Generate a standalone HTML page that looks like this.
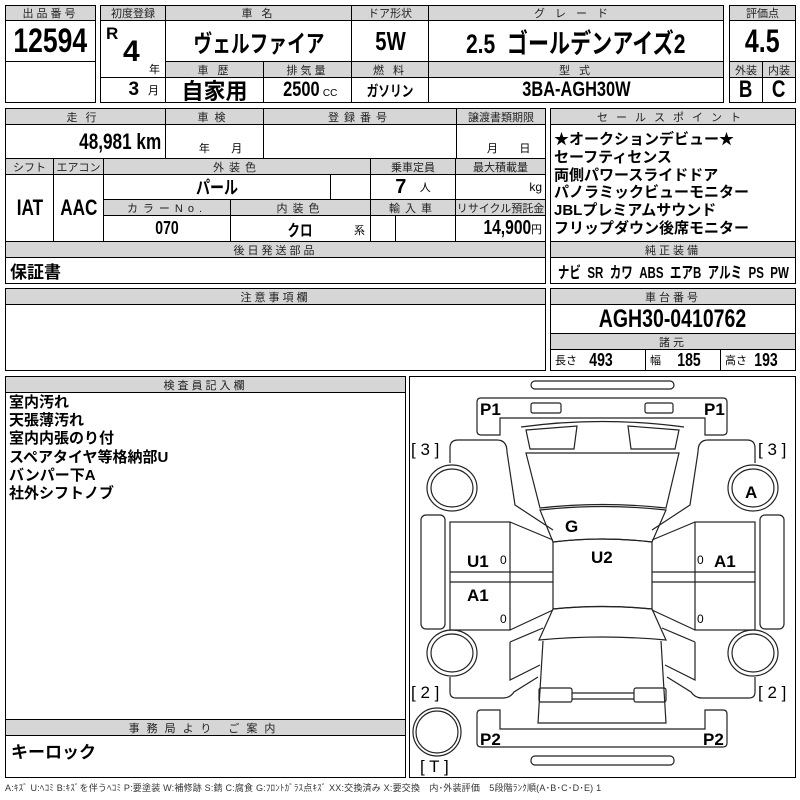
<!DOCTYPE html>
<html><head><meta charset="utf-8"><style>
body{margin:0;width:800px;height:800px;background:#fff;position:relative;overflow:hidden;font-family:"Liberation Sans","Noto Sans CJK JP",sans-serif;color:#000}
.c{position:absolute;border:1px solid #000;box-sizing:border-box;display:flex;align-items:center;justify-content:center;background:#fff;white-space:nowrap}
.h{background:#d6d6d6;font-size:11px;letter-spacing:3px;color:#222}
.b{font-weight:bold}
.n{display:inline-block;transform:scaleX(.78)}
.nr{display:inline-block;transform:scaleX(.78);transform-origin:right center}
svg{position:absolute;left:0;top:0}
</style></head><body>
<div class="c h" style="left:5px;top:5px;width:91px;height:16px">出品番号</div>
<div class="c b" style="left:5px;top:20px;width:91px;height:42px;font-size:34px"><span class="n">12594</span></div>
<div class="c" style="left:5px;top:61px;width:91px;height:42px"></div>

<div class="c h" style="left:100px;top:5px;width:66px;height:16px;letter-spacing:0">初度登録</div>
<div class="c h" style="left:165px;top:5px;width:187px;height:16px">車 名</div>
<div class="c h" style="left:351px;top:5px;width:78px;height:16px;letter-spacing:0">ドア形状</div>
<div class="c h" style="left:428px;top:5px;width:296px;height:16px;letter-spacing:10px">グレード</div>
<div class="c" style="left:100px;top:20px;width:66px;height:58px"><span class="b" style="position:absolute;left:5px;top:3px;font-size:17px">R</span><span class="b" style="position:absolute;left:22px;top:14px;font-size:30px">4</span><span style="position:absolute;left:48px;top:40px;font-size:11px">年</span></div>
<div class="c" style="left:100px;top:77px;width:66px;height:26px;justify-content:flex-end;padding-right:6px"><span class="b" style="font-size:19px">3</span>&nbsp;&nbsp;<span style="font-size:11px">月</span></div>
<div class="c b" style="left:165px;top:20px;width:187px;height:42px;font-size:24px"><span class="n">ヴェルファイア</span></div>
<div class="c b" style="left:351px;top:20px;width:78px;height:42px;font-size:26px"><span class="n">5W</span></div>
<div class="c b" style="left:428px;top:20px;width:296px;height:42px;font-size:27px"><span class="n">2.5&nbsp;&nbsp;ゴールデンアイズ2</span></div>
<div class="c h" style="left:165px;top:61px;width:99px;height:17px">車 歴</div>
<div class="c h" style="left:263px;top:61px;width:89px;height:17px">排気量</div>
<div class="c h" style="left:351px;top:61px;width:78px;height:17px">燃 料</div>
<div class="c h" style="left:428px;top:61px;width:296px;height:17px">型 式</div>
<div class="c b" style="left:165px;top:77px;width:99px;height:26px;font-size:22px">自家用</div>
<div class="c" style="left:263px;top:77px;width:89px;height:26px"><span class="b n" style="font-size:21px;margin-right:-6px">2500</span>&nbsp;<span style="font-size:10px;margin-top:6px">CC</span></div>
<div class="c b" style="left:351px;top:77px;width:78px;height:26px;font-size:15px"><span class="n">ガソリン</span></div>
<div class="c b" style="left:428px;top:77px;width:296px;height:26px;font-size:21px"><span class="n">3BA-AGH30W</span></div>

<div class="c h" style="left:729px;top:5px;width:67px;height:16px;letter-spacing:0">評価点</div>
<div class="c b" style="left:729px;top:20px;width:67px;height:42px;font-size:32px"><span class="n">4.5</span></div>
<div class="c h" style="left:729px;top:61px;width:34px;height:17px;letter-spacing:0">外装</div>
<div class="c h" style="left:762px;top:61px;width:34px;height:17px;letter-spacing:0">内装</div>
<div class="c b" style="left:729px;top:77px;width:34px;height:26px;font-size:24px"><span class="n">B</span></div>
<div class="c b" style="left:762px;top:77px;width:34px;height:26px;font-size:24px"><span class="n">C</span></div>

<div class="c h" style="left:5px;top:108px;width:161px;height:17px;letter-spacing:8px">走行</div>
<div class="c h" style="left:165px;top:108px;width:99px;height:17px;letter-spacing:6px">車検</div>
<div class="c h" style="left:263px;top:108px;width:194px;height:17px;letter-spacing:5px">登録番号</div>
<div class="c h" style="left:456px;top:108px;width:90px;height:17px;letter-spacing:0">譲渡書類期限</div>
<div class="c b" style="left:5px;top:124px;width:161px;height:35px;font-size:22px;justify-content:flex-end;padding-right:4px"><span class="nr">48,981 km</span></div>
<div class="c" style="left:165px;top:124px;width:99px;height:35px;font-size:11px;align-items:flex-end;padding-bottom:2px">&nbsp;&nbsp;&nbsp;&nbsp;年&nbsp;&nbsp;&nbsp;&nbsp;&nbsp;&nbsp;&nbsp;月</div>
<div class="c" style="left:263px;top:124px;width:194px;height:35px"></div>
<div class="c" style="left:456px;top:124px;width:90px;height:35px;font-size:11px;align-items:flex-end;padding-bottom:2px">&nbsp;&nbsp;&nbsp;&nbsp;&nbsp;月&nbsp;&nbsp;&nbsp;&nbsp;&nbsp;&nbsp;&nbsp;日</div>
<div class="c h" style="left:5px;top:158px;width:49px;height:17px;letter-spacing:0">シフト</div>
<div class="c h" style="left:53px;top:158px;width:51px;height:17px;letter-spacing:0">エアコン</div>
<div class="c h" style="left:103px;top:158px;width:268px;height:17px;letter-spacing:5px">外装色</div>
<div class="c h" style="left:370px;top:158px;width:86px;height:17px;letter-spacing:0">乗車定員</div>
<div class="c h" style="left:455px;top:158px;width:91px;height:17px;letter-spacing:0">最大積載量</div>
<div class="c b" style="left:5px;top:174px;width:49px;height:68px;font-size:22px"><span class="n">IAT</span></div>
<div class="c b" style="left:53px;top:174px;width:51px;height:68px;font-size:22px"><span class="n">AAC</span></div>
<div class="c b" style="left:103px;top:174px;width:228px;height:26px;font-size:18px"><span class="n">パール</span></div>
<div class="c" style="left:330px;top:174px;width:41px;height:26px"></div>
<div class="c" style="left:370px;top:174px;width:86px;height:26px"><span class="b" style="font-size:20px">7</span>&nbsp;&nbsp;&nbsp;<span style="font-size:11px">人</span></div>
<div class="c" style="left:455px;top:174px;width:91px;height:26px;font-size:12px;justify-content:flex-end;padding-right:3px">kg</div>
<div class="c h" style="left:103px;top:199px;width:128px;height:17px;letter-spacing:5px">カラーNo.</div>
<div class="c h" style="left:230px;top:199px;width:141px;height:17px;letter-spacing:5px">内装色</div>
<div class="c h" style="left:370px;top:199px;width:86px;height:17px;letter-spacing:5px">輸入車</div>
<div class="c h" style="left:455px;top:199px;width:91px;height:17px;letter-spacing:0">リサイクル預託金</div>
<div class="c b" style="left:103px;top:215px;width:128px;height:27px;font-size:18px"><span class="n">070</span></div>
<div class="c" style="left:230px;top:215px;width:141px;height:27px"><span class="b n" style="font-size:16px">クロ</span><span style="position:absolute;right:5px;bottom:3px;font-size:11px">系</span></div>
<div class="c" style="left:370px;top:215px;width:26px;height:27px"></div>
<div class="c" style="left:395px;top:215px;width:61px;height:27px"></div>
<div class="c" style="left:455px;top:215px;width:91px;height:27px;justify-content:flex-end;padding-right:3px"><span class="b nr" style="font-size:20px">14,900</span><span style="font-size:11px">円</span></div>
<div class="c h" style="left:5px;top:241px;width:541px;height:17px">後日発送部品</div>
<div class="c b" style="left:5px;top:257px;width:541px;height:27px;font-size:17px;justify-content:flex-start;padding-left:4px">保証書</div>

<div class="c h" style="left:550px;top:108px;width:246px;height:17px;letter-spacing:8px">セールスポイント</div>
<div class="c b" style="left:550px;top:124px;width:246px;height:118px;font-size:15px;line-height:17.8px;display:block;padding:6px 0 0 3px">★オークションデビュー★<br>セーフティセンス<br>両側パワースライドドア<br>パノラミックビューモニター<br>JBLプレミアムサウンド<br>フリップダウン後席モニター</div>
<div class="c h" style="left:550px;top:241px;width:246px;height:17px">純正装備</div>
<div class="c b" style="left:550px;top:257px;width:246px;height:27px;font-size:16px"><span class="n" style="transform:scaleX(.72)">ナビ&nbsp;&nbsp;SR&nbsp;&nbsp;カワ&nbsp;&nbsp;ABS&nbsp;&nbsp;エアB&nbsp;&nbsp;アルミ&nbsp;&nbsp;PS&nbsp;&nbsp;PW</span></div>

<div class="c h" style="left:5px;top:288px;width:541px;height:17px">注意事項欄</div>
<div class="c" style="left:5px;top:304px;width:541px;height:67px"></div>
<div class="c h" style="left:550px;top:288px;width:246px;height:17px">車台番号</div>
<div class="c b" style="left:550px;top:304px;width:246px;height:30px;font-size:25px"><span class="n">AGH30-0410762</span></div>
<div class="c h" style="left:550px;top:333px;width:246px;height:17px">諸元</div>
<div class="c" style="left:550px;top:349px;width:96px;height:22px;justify-content:flex-start;padding-left:4px"><span style="font-size:11px">長さ</span>&nbsp;&nbsp;<span class="b n" style="font-size:18px">493</span></div>
<div class="c" style="left:645px;top:349px;width:76px;height:22px;justify-content:flex-start;padding-left:4px"><span style="font-size:11px">幅</span>&nbsp;&nbsp;&nbsp;<span class="b n" style="font-size:18px">185</span></div>
<div class="c" style="left:720px;top:349px;width:76px;height:22px;justify-content:flex-start;padding-left:4px"><span style="font-size:11px">高さ</span>&nbsp;<span class="b n" style="font-size:18px">193</span></div>

<div class="c h" style="left:5px;top:376px;width:401px;height:17px">検査員記入欄</div>
<div class="c b" style="left:5px;top:392px;width:401px;height:328px;font-size:15px;line-height:18.2px;display:block;padding:1px 0 0 3px">室内汚れ<br>天張薄汚れ<br>室内内張のり付<br>スペアタイヤ等格納部U<br>バンパー下A<br>社外シフトノブ</div>
<div class="c h" style="left:5px;top:719px;width:401px;height:17px;letter-spacing:7px">事務局より ご案内</div>
<div class="c b" style="left:5px;top:735px;width:401px;height:43px;font-size:17px;justify-content:flex-start;align-items:flex-start;padding:2px 0 0 5px">キーロック</div>
<div class="c" style="left:409px;top:376px;width:387px;height:402px"></div>
<div style="position:absolute;left:5px;top:781px;font-size:9px;color:#333;white-space:nowrap;letter-spacing:0.2px">A:ｷｽﾞ U:ﾍｺﾐ B:ｷｽﾞを伴うﾍｺﾐ P:要塗装 W:補修跡 S:錆 C:腐食 G:ﾌﾛﾝﾄｶﾞﾗｽ点ｷｽﾞ XX:交換済み X:要交換　内･外装評価　5段階ﾗﾝｸ順(A･B･C･D･E) 1</div>

<svg width="800" height="800" viewBox="0 0 800 800" fill="none" stroke="#222" stroke-width="1.2">
<rect x="531" y="381" width="143" height="8" rx="4"/>
<rect x="531" y="756" width="143" height="9" rx="4"/>
<path d="M481,398H723Q727,398 727,402V431Q727,435 723,435H705V418H500V435H481Q477,435 477,431V402Q477,398 481,398Z"/>
<path d="M481,747H723Q727,747 727,743V714Q727,710 723,710H705V729H500V710H481Q477,710 477,714V743Q477,747 481,747Z"/>
<rect x="531" y="403" width="30" height="10" rx="2"/><rect x="645" y="403" width="28" height="10" rx="2"/>
<path d="M521,427Q602,416 684,427"/>
<path d="M526,453H679L666,508Q602,501 540,508Z"/>
<path d="M540,510Q602,503 666,510L652,542Q602,536 553,542Z"/>
<path d="M553,542Q602,536 652,542V609Q602,604 553,609Z"/>
<path d="M553,609Q602,604 652,609L666,640Q602,634 539,640Z"/>
<path d="M543,641L538,723H666L661,641"/>
<rect x="539" y="688" width="33" height="14" rx="2"/><rect x="634" y="688" width="32" height="14" rx="2"/>
<path d="M572,693H634M572,699H634"/>
<g id="half">
<path d="M526,430L577,426L574,449L530,449Z"/>
<path d="M450,463V448Q450,440 458,440H497Q507,440 507,452L515,505L553,530"/>
<rect x="450" y="522" width="60" height="108"/>
<path d="M510,522L553,540M510,630L553,610M450,572H553M450,582H553"/>
<path d="M510,642L543,628M510,642V680L540,665"/>
<path d="M450,677V692Q450,698 456,698H503Q510,698 514,692L538,677"/>
<ellipse cx="452" cy="488" rx="25" ry="23"/><ellipse cx="452" cy="488" rx="21" ry="19"/>
<ellipse cx="452" cy="653" rx="25" ry="23"/><ellipse cx="452" cy="653" rx="21" ry="19"/>
<rect x="421" y="515" width="24" height="114" rx="5"/>
</g>
<use href="#half" transform="translate(1205,0) scale(-1,1)"/>
<circle cx="437" cy="732" r="24"/><circle cx="437" cy="732" r="21"/>
<g fill="#000" stroke="none" font-family="Liberation Sans,sans-serif" font-weight="bold" font-size="17">
<text x="480" y="415">P1</text><text x="704" y="415">P1</text>
<text x="745" y="498">A</text><text x="565" y="532">G</text>
<text x="467" y="567">U1</text><text x="591" y="563">U2</text>
<text x="714" y="567">A1</text><text x="467" y="601">A1</text>
<text x="480" y="745">P2</text><text x="703" y="745">P2</text>
<text x="411" y="455" font-weight="normal">[ 3 ]</text><text x="758" y="455" font-weight="normal">[ 3 ]</text>
<text x="411" y="698" font-weight="normal">[ 2 ]</text><text x="758" y="698" font-weight="normal">[ 2 ]</text>
<text x="420" y="772" font-weight="normal">[ T ]</text>
<g font-size="12" font-weight="normal"><text x="500" y="564">0</text><text x="500" y="623">0</text><text x="697" y="564">0</text><text x="697" y="623">0</text></g>
</g>
</svg>
</body></html>
